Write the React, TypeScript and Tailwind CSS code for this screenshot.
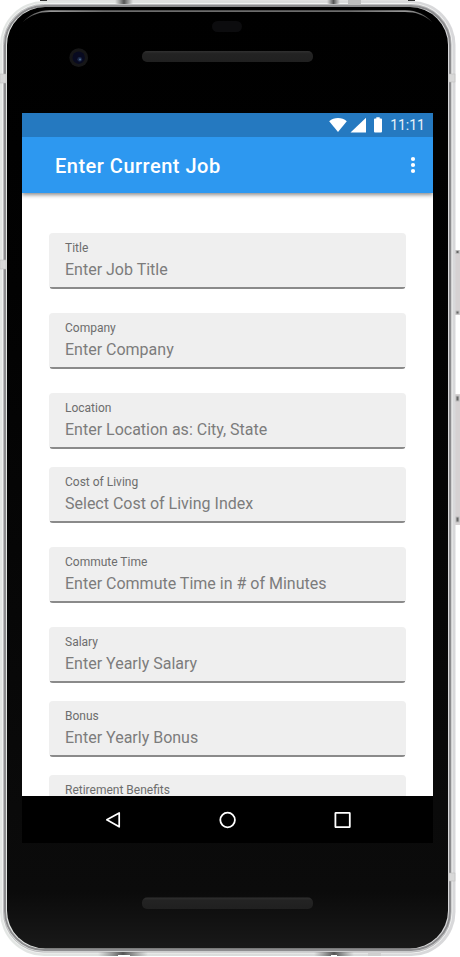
const fields = [
  { label: "Title", placeholder: "Enter Job Title", gap: "mb-6" },
  { label: "Company", placeholder: "Enter Company", gap: "mb-6" },
  { label: "Location", placeholder: "Enter Location as: City, State", gap: "mb-[18px]" },
  { label: "Cost of Living", placeholder: "Select Cost of Living Index", gap: "mb-6" },
  { label: "Commute Time", placeholder: "Enter Commute Time in # of Minutes", gap: "mb-6" },
  { label: "Salary", placeholder: "Enter Yearly Salary", gap: "mb-[18px]" },
  { label: "Bonus", placeholder: "Enter Yearly Bonus", gap: "mb-[18px]" },
  { label: "Retirement Benefits", placeholder: "", gap: "" },
];

function PhoneBody() {
  return (
    <svg className="absolute inset-0" width="460" height="957" viewBox="0 0 460 957" aria-hidden="true">
      <defs>
        <linearGradient id="glass" x1="0" y1="0" x2="0" y2="1">
          <stop offset="0" stopColor="#000" />
          <stop offset="0.3" stopColor="#020202" />
          <stop offset="0.85" stopColor="#0a0a0a" />
          <stop offset="0.94" stopColor="#0b0b0b" />
          <stop offset="1" stopColor="#191919" />
        </linearGradient>
        <linearGradient id="metal" x1="0" y1="0" x2="1" y2="0">
          <stop offset="0" stopColor="#e3e6e4" />
          <stop offset="0.5" stopColor="#dadcdb" />
          <stop offset="1" stopColor="#d8d8da" />
        </linearGradient>
        <linearGradient id="slot" x1="0" y1="0" x2="0" y2="1">
          <stop offset="0" stopColor="#303030" />
          <stop offset="0.25" stopColor="#232323" />
          <stop offset="1" stopColor="#202020" />
        </linearGradient>
        <linearGradient id="shine" x1="0" y1="0" x2="1" y2="0">
          <stop offset="0" stopColor="#444" />
          <stop offset="0.07" stopColor="#999" />
          <stop offset="0.2" stopColor="#6c6c6c" />
          <stop offset="0.8" stopColor="#6c6c6c" />
          <stop offset="0.94" stopColor="#999" />
          <stop offset="1" stopColor="#444" />
        </linearGradient>
        <linearGradient id="seam" x1="0" y1="0" x2="1" y2="0">
          <stop offset="0" stopColor="#666" stopOpacity="0" />
          <stop offset="0.5" stopColor="#555" />
          <stop offset="1" stopColor="#666" stopOpacity="0" />
        </linearGradient>
      </defs>
      <rect x="47" y="0" width="361" height="3" fill="#dedede" />
      <rect x="40" y="0" width="7" height="1" fill="#333" />
      <rect x="408" y="0" width="7" height="1" fill="#333" />
      <rect x="455" y="250" width="5" height="65" fill="#d5d1d2" />
      <rect x="455" y="394" width="5" height="131" fill="#d5d1d2" />
      <rect x="0" y="1" width="455.5" height="955" rx="44" fill="url(#metal)" />
      <rect x="2.5" y="3.5" width="449.5" height="949.5" rx="41" fill="none" stroke="#f0f1f0" strokeWidth="1" />
      <rect x="3.5" y="4.5" width="447.5" height="947.5" rx="40" fill="none" stroke="#bcbcbe" strokeWidth="1" />
      <rect x="5" y="6" width="445" height="944" rx="39" fill="none" stroke="#8c8c8e" strokeWidth="2" />
      <rect x="7" y="7" width="441" height="941.5" rx="38" fill="url(#glass)" />
      <path d="M23 22C29 15 38 10.2 50 10.2H405C417 10.2 426 15 432 22C424 15 416 12 405 12H50C39 12 31 15 23 22Z" fill="url(#shine)" />
      <rect x="115" y="0" width="18" height="4" fill="url(#seam)" />
      <rect x="327" y="0" width="13" height="4" fill="url(#seam)" />
      <rect x="348" y="0" width="13" height="5" fill="#bdbdbd" />
      <rect x="98" y="952" width="50" height="4" fill="url(#seam)" />
      <rect x="314" y="952" width="40" height="4" fill="url(#seam)" />
      <rect x="368" y="953" width="13" height="3" fill="#cfcfcf" />
      <rect x="118" y="955" width="12" height="2" fill="#fff" />
      <rect x="331" y="955" width="6" height="2" fill="#fff" />
      <g fill="#d8d8d8" stroke="#bbb" strokeWidth="0.5">
        <rect x="0" y="74" width="6" height="9" />
        <rect x="0" y="260" width="6" height="9" />
        <rect x="449" y="74" width="6" height="8" />
        <rect x="449" y="873" width="6" height="8" />
      </g>
      <g fill="#666" stroke="#bbb" strokeWidth="1">
        <rect x="456" y="250.5" width="3" height="3" />
        <rect x="456" y="311" width="3" height="3" />
        <rect x="456" y="396" width="3" height="5" />
        <rect x="456" y="517" width="3" height="5" />
      </g>
      <rect x="212" y="21" width="30" height="11" rx="5.5" fill="#0c0c0e" />
      <rect x="142" y="51" width="171" height="11" rx="5" fill="url(#slot)" />
      <rect x="142" y="897.5" width="171" height="11.5" rx="5" fill="url(#slot)" />
      <circle cx="78.7" cy="57.7" r="9.4" fill="#161617" />
      <circle cx="78.7" cy="57.7" r="6.2" fill="#080a20" />
      <circle cx="79.7" cy="59.3" r="2.4" fill="#1b2848" />
      <circle cx="80" cy="59.5" r="1" fill="#506a8c" />
    </svg>
  );
}

function StatusBar() {
  return (
    <div className="relative z-10 flex h-6 shrink-0 items-center justify-end bg-[#2579c0] pr-2 text-white">
      <svg className="mr-[1px]" width="61" height="24" viewBox="0 0 61 24" fill="currentColor" aria-hidden="true">
        <path d="M10 19L1.2 8.2C6 4 14 4 18.8 8.2Z" />
        <path d="M22.5 19.5L38 4.8V19.5Z" />
        <path d="M48.3 5.5V4.2H51.7V5.5H53Q54 5.5 54 6.5V18.5Q54 19.5 53 19.5H47Q46 19.5 46 18.5V6.5Q46 5.5 47 5.5Z" />
      </svg>
      <span className="text-sm leading-6 text-white/90">11:11</span>
    </div>
  );
}

function AppBar() {
  return (
    <header className="relative flex h-14 shrink-0 items-center justify-between bg-[#2d98f0] pr-[17px] pl-[33px] text-white shadow-[0_2px_4px_rgba(0,0,0,0.45)]">
      <h1 className="pt-[2px] text-xl font-medium tracking-[0.5px]">Enter Current Job</h1>
      <svg width="6" height="18" viewBox="0 0 6 18" fill="currentColor" aria-hidden="true">
        <circle cx="3" cy="3" r="2.1" />
        <circle cx="3" cy="9" r="2.1" />
        <circle cx="3" cy="15" r="2.1" />
      </svg>
    </header>
  );
}

function NavBar() {
  return (
    <nav className="flex h-[47px] shrink-0 items-center justify-between bg-black px-[82px] text-white">
      <svg width="18" height="18" viewBox="0 0 18 18" fill="none" stroke="currentColor" strokeWidth="1.7" strokeLinejoin="round" aria-hidden="true">
        <path d="M15.2 2V15.8L2.8 8.8Z" />
      </svg>
      <svg width="18" height="18" viewBox="0 0 18 18" fill="none" stroke="currentColor" strokeWidth="1.8" aria-hidden="true">
        <circle cx="8.6" cy="9" r="7.3" />
      </svg>
      <svg width="18" height="18" viewBox="0 0 18 18" fill="none" stroke="currentColor" strokeWidth="1.8" strokeLinejoin="round" aria-hidden="true">
        <rect x="2.4" y="1.8" width="14.4" height="14.4" rx="0.5" />
      </svg>
    </nav>
  );
}

export default function App() {
  return (
    <div className="relative h-[957px] w-[460px] overflow-hidden bg-white pt-[113px] pl-[22px] font-['Roboto',sans-serif]">
      <PhoneBody />
      <div className="relative flex h-[730px] w-[411px] flex-col overflow-hidden bg-white">
        <StatusBar />
        <AppBar />
        <main className="min-h-0 flex-1 overflow-hidden pt-10 pl-[27px]">
          {fields.map((f) => (
            <div key={f.label} className={`h-14 w-[357px] ${f.gap}`}>
              <div className="flex h-full flex-col overflow-hidden rounded-[4px] bg-[#efefef] pt-[7px]">
                <div className="px-4 text-xs leading-4 text-[#6d6d6d]">{f.label}</div>
                {f.placeholder && (
                  <div className="px-4 pt-[2px] text-base leading-6 text-[#7c7c7c]">{f.placeholder}</div>
                )}
                <div className="mx-px mt-auto h-[2px] bg-[#8a8a8a]" />
              </div>
            </div>
          ))}
        </main>
        <NavBar />
      </div>
    </div>
  );
}
